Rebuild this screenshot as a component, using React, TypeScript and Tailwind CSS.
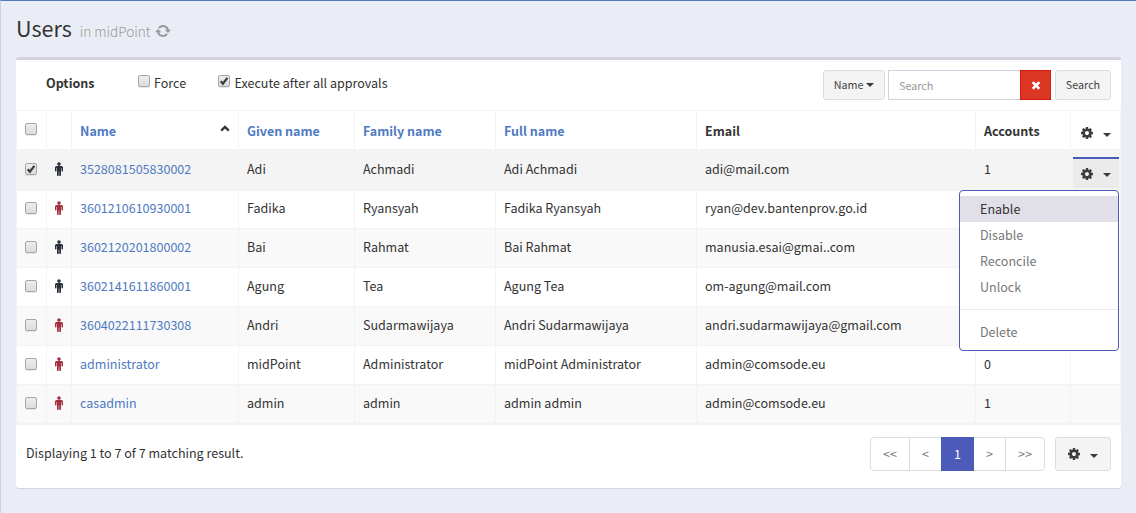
import React from "react";

const COG =
  "M1152 896q0-106-75-181t-181-75-181 75-75 181 75 181 181 75 181-75 75-181zm512-109v222q0 12-8 23t-20 13l-185 28q-19 54-39 91 35 50 107 138 10 12 10 25t-9 23q-27 37-99 108t-94 71q-12 0-26-9l-138-108q-44 23-91 38-16 136-29 186-7 28-36 28h-222q-14 0-24.5-8.5t-11.5-21.5l-28-184q-49-16-90-37l-141 107q-10 9-25 9-14 0-25-11-126-114-165-168-7-10-7-23 0-12 8-23 15-21 51-66.5t54-70.5q-27-50-41-99l-183-27q-13-2-21-12.5t-8-23.5v-222q0-12 8-23t19-13l186-28q14-46 39-92-40-57-107-138-10-12-10-24 0-10 9-23 26-36 98.5-107.5t94.5-71.5q13 0 26 10l138 107q44-23 91-38 16-136 29-186 7-28 36-28h222q14 0 24.5 8.5t11.5 21.5l28 184q49 16 90 37l142-107q9-9 24-9 13 0 25 10 129 119 165 170 7 8 7 22 0 12-8 23-15 21-51 66.5t-54 70.5q26 50 41 98l183 28q13 2 21 12.5t8 23.5z";
const MALE =
  "M1408 704v416q0 40-28 68t-68 28-68-28-28-68v-352h-64v912q0 46-33 79t-79 33-79-33-33-79v-464h-64v464q0 46-33 79t-79 33-79-33-33-79v-912h-64v352q0 40-28 68t-68 28-68-28-28-68v-416q0-80 56-136t136-56h640q80 0 136 56t56 136zm-288-448q0 93-65.5 158.5t-158.5 65.5-158.5-65.5-65.5-158.5 65.5-158.5 158.5-65.5 158.5 65.5 65.5 158.5z";
const CLOSE =
  "M1490 1322q0 40-28 68l-136 136q-28 28-68 28t-68-28l-294-294-294 294q-28 28-68 28t-68-28l-136-136q-28-28-28-68t28-68l294-294-294-294q-28-28-28-68t28-68l136-136q28-28 68-28t68 28l294 294 294-294q28-28 68-28t68 28l136 136q28 28 28 68t-28 68l-294 294 294 294q28 28 28 68z";

function Glyph({ d, className, box = "0 0 1792 1792" }: { d: string; className: string; box?: string }) {
  return (
    <svg viewBox={box} className={`block shrink-0 ${className}`} fill="currentColor" aria-hidden="true">
      <path d={d} />
    </svg>
  );
}

function RefreshIcon() {
  return (
    <svg viewBox="0 0 16 12" className="block h-[12px] w-[16px]" fill="none" aria-hidden="true">
      <path d="M3.9 3.2 A5 5 0 0 1 13 5.8" stroke="currentColor" strokeWidth="2" />
      <path d="M12.1 8.8 A5 5 0 0 1 3 6.2" stroke="currentColor" strokeWidth="2" />
      <path d="M0 7.2 L3 4 L6.2 7.2 Z M16 4.8 L13 8 L9.8 4.8 Z" fill="currentColor" />
    </svg>
  );
}

function Caret() {
  return <span className="block h-0 w-0 border-x-4 border-t-4 border-x-transparent border-t-[#3c3c3c]" />;
}

function Gear() {
  return (
    <span className="flex items-center text-[#3c3c3c]">
      <Glyph d={COG} className="size-[14px]" />
      <span className="mt-[3px] ml-[9px]">
        <Caret />
      </span>
    </span>
  );
}

function Check({ on = false }: { on?: boolean }) {
  return (
    <span className="relative block size-[12px] shrink-0 rounded-[2px] border border-[#a6a6a6] bg-linear-to-b from-[#ededed] to-[#dcdcdc] shadow-[0_1px_0_rgba(0,0,0,0.08)]">
      {on && (
        <svg viewBox="0 0 12 12" className="absolute -top-px -left-px size-[12px]" fill="none" aria-hidden="true">
          <path d="M2.8 6.2 L4.9 8.7 L9.4 2.9" stroke="#3c3c3c" strokeWidth="2.3" />
        </svg>
      )}
    </span>
  );
}

type User = { name: string; given: string; family: string; full: string; email: string; accounts: string; dark: boolean };

const users: User[] = [
  { name: "3528081505830002", given: "Adi", family: "Achmadi", full: "Adi Achmadi", email: "adi@mail.com", accounts: "1", dark: true },
  { name: "3601210610930001", given: "Fadika", family: "Ryansyah", full: "Fadika Ryansyah", email: "ryan@dev.bantenprov.go.id", accounts: "", dark: false },
  { name: "3602120201800002", given: "Bai", family: "Rahmat", full: "Bai Rahmat", email: "manusia.esai@gmai..com", accounts: "", dark: true },
  { name: "3602141611860001", given: "Agung", family: "Tea", full: "Agung Tea", email: "om-agung@mail.com", accounts: "", dark: true },
  { name: "3604022111730308", given: "Andri", family: "Sudarmawijaya", full: "Andri Sudarmawijaya", email: "andri.sudarmawijaya@gmail.com", accounts: "", dark: false },
  { name: "administrator", given: "midPoint", family: "Administrator", full: "midPoint Administrator", email: "admin@comsode.eu", accounts: "0", dark: false },
  { name: "casadmin", given: "admin", family: "admin", full: "admin admin", email: "admin@comsode.eu", accounts: "1", dark: false },
];

const columns =
  "grid grid-cols-[30px_25px_167px_116px_141px_201px_279px_95px_50px] *:flex *:items-center *:border-r *:border-b *:border-[#f3f3f3] *:pl-2";

function ActionMenu() {
  const item = "flex h-[26px] items-center pl-5";
  return (
    <div className="absolute top-[31px] right-0 z-10 h-[161px] w-[160px] rounded-[4px] border border-[#4c5bb9] bg-white pt-[5px] text-[12.54px] text-[#777]">
      <div className={`${item} bg-[#e1dfe7] text-[#333]`}>Enable</div>
      <div className={item}>Disable</div>
      <div className={item}>Reconcile</div>
      <div className={item}>Unlock</div>
      <div className="mt-[9px] mb-[9px] h-px bg-[#e8e8e8]" />
      <div className={item}>Delete</div>
    </div>
  );
}

function UserRow({ user, index }: { user: User; index: number }) {
  const selected = index === 0;
  const shade = selected ? "h-10 bg-[#f4f4f4]" : index % 2 === 0 ? "h-[39px] bg-[#f9f9f9]" : "h-[39px] bg-white";
  return (
    <div className={`${columns} *:pb-[2px] ${shade}`}>
      <div>
        <Check on={selected} />
      </div>
      <div className={user.dark ? "text-[#29303c]" : "text-[#a3303f]"}>
        <Glyph d={MALE} box="384 0 1024 1792" className="h-[14px] w-[8px]" />
      </div>
      <div className="text-[#4f7ac2]">{user.name}</div>
      <div>{user.given}</div>
      <div>{user.family}</div>
      <div>{user.full}</div>
      <div>{user.email}</div>
      <div>{user.accounts}</div>
      <div className="pl-0!">
        {selected && (
          <div className="relative mt-[7px] ml-[2px] flex h-[31px] w-[46px] items-center border-t-2 border-[#4c5bb9] bg-[#ebebeb] pl-[7px]">
            <Gear />
            <ActionMenu />
          </div>
        )}
      </div>
    </div>
  );
}

export default function App() {
  const button = "flex items-center rounded-[3px] border border-[#ddd] bg-[#f4f4f4]";
  const page = "flex items-center justify-center border-r border-[#ddd]";
  return (
    <div className="h-[513px] w-[1136px] overflow-hidden border-t border-l border-t-[#4f7ac2] border-l-[#cfd0e0] bg-[#eaedf5] pr-[15px] pl-[15px] font-['Noto_Sans_CJK_SC',sans-serif] text-[12.54px] leading-5 text-[#333]">
      <header className="flex h-14 items-center pb-[2px]">
        <h1 className="text-[21.5px] leading-8 font-normal">Users</h1>
        <small className="mt-[5px] ml-[8px] text-[13.6px] leading-5 font-light text-[#999]">in midPoint</small>
        <span className="mt-[5px] ml-[4px] text-[#999]">
          <RefreshIcon />
        </span>
      </header>

      <main className="h-[431px] rounded-[3px] border-t-[3px] border-[#d2d2e0] bg-white shadow-[0_1px_1px_rgba(0,0,0,0.1)]">
        <div className="flex h-[50px] justify-between pr-[10px] pl-[30px]">
          <div className="flex items-start pt-[13px]">
            <strong className="w-[92px] font-bold">Options</strong>
            <label className="flex w-[80px] gap-1">
              <span className="mt-[2px]">
                <Check />
              </span>
              Force
            </label>
            <label className="flex gap-[4.5px]">
              <span className="mt-[2px]">
                <Check on />
              </span>
              Execute after all approvals
            </label>
          </div>
          <div className="mt-[10px] flex h-[30px] text-[10.75px] text-[#444]">
            <div className={`${button} w-[62px] justify-center gap-[3px]`}>
              Name
              <Caret />
            </div>
            <div className="ml-[3px] flex w-[132px] items-center border border-r-0 border-[#d2d2e0] pt-px pl-[10px] text-[#999]">Search</div>
            <div className="flex w-[31px] items-center justify-center border border-[#d41a0a] bg-[#dd3625] text-white">
              <Glyph d={CLOSE} className="size-3" />
            </div>
            <div className={`${button} ml-1 w-[56px] justify-center`}>Search</div>
          </div>
        </div>

        <div className="border-t border-b border-l border-[#f3f3f3]">
          <div className={`${columns} h-[39px] font-bold *:pt-px`}>
            <div className="pt-0! pb-[3px]">
              <Check />
            </div>
            <div />
            <div className="justify-between pr-2 text-[#4f7ac2]">
              Name
              <svg viewBox="0 0 10 7" className="mb-[4px] h-[7px] w-[10px]" fill="none" aria-hidden="true">
                <path d="M1.2 5.6 L5 1.9 L8.8 5.6" stroke="#333" strokeWidth="2.2" />
              </svg>
            </div>
            <div className="text-[#4f7ac2]">Given name</div>
            <div className="text-[#4f7ac2]">Family name</div>
            <div className="text-[#4f7ac2]">Full name</div>
            <div>Email</div>
            <div>Accounts</div>
            <div className="pt-[6px]! pl-[9px]!">
              <Gear />
            </div>
          </div>
          {users.map((user, i) => (
            <UserRow key={user.name} user={user} index={i} />
          ))}
        </div>

        <footer className="flex justify-between pt-[12px] pr-[10px] pl-[10px]">
          <p className="pt-[6px]">Displaying 1 to 7 of 7 matching result.</p>
          <div className="flex">
            <nav className="flex h-[34px] w-[175px] rounded-[4px] border border-[#ddd] text-[#777]">
              <span className={`${page} w-[39px]`}>&lt;&lt;</span>
              <span className={`${page} w-[32px]`}>&lt;</span>
              <span className="-my-px -ml-px flex w-[33px] items-center justify-center bg-[#4c5bb9] text-white">1</span>
              <span className={`${page} w-[32px]`}>&gt;</span>
              <span className="flex flex-1 items-center justify-center">&gt;&gt;</span>
            </nav>
            <div className={`${button} ml-[10px] h-[34px] w-[56px] pl-[11px]`}>
              <Gear />
            </div>
          </div>
        </footer>
      </main>
    </div>
  );
}
